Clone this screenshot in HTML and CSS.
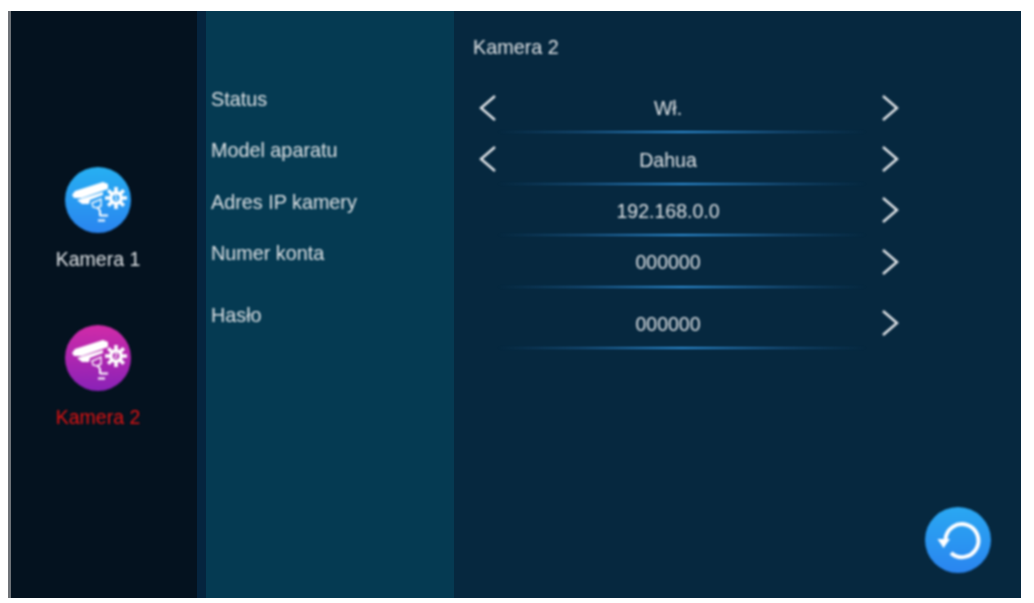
FILE: index.html
```html
<!DOCTYPE html>
<html lang="pl">
<head>
  <meta charset="UTF-8" />
  <title>Kamera 2</title>
  <link rel="stylesheet" href="styles.css">
</head>
<body>
  <svg class="defs" width="0" height="0">
    <symbol id="camIcon" viewBox="0 0 66 66">
      <!-- camera body -->
      <path d="M7 28 L10 24 L38 15 L43 17 L43 22 L17 31 L9 31 Z" fill="#fff"/>
      <path d="M12 33 L38 25 L38 28 L25 33 L24 37 L17 37 Z" fill="#fff"/>
      <path d="M27 36 L36 32 L36 39 L32 41 L28 40 Z" fill="none" stroke="#fff" stroke-width="1.4"/>
      <!-- bracket -->
      <path d="M33 41 L35 44 L35 49 M35 48.5 L43 48.5 M33 53.5 L40 53.5" fill="none" stroke="#fff" stroke-width="2"/>
      <!-- gear -->
      <circle cx="51" cy="31" r="7" fill="#fff"/>
      <path d="M51 20 V42 M40 31 H62 M43.2 23.2 L58.8 38.8 M58.8 23.2 L43.2 38.8" stroke="#fff" stroke-width="3.6"/>
      <circle cx="51" cy="31" r="3.4" fill="currentColor"/>
    </symbol>
  </svg>

  <div class="screen">
    <div class="side">
      <div class="cam cam-one">
        <div class="cam-btn">
          <svg class="cam-icon"><use href="#camIcon"/></svg>
          <span class="cam-digit">1</span>
        </div>
        <div class="cam-name">Kamera 1</div>
      </div>
      <div class="cam cam-two">
        <div class="cam-btn">
          <svg class="cam-icon"><use href="#camIcon"/></svg>
          <span class="cam-digit">2</span>
        </div>
        <div class="cam-name">Kamera 2</div>
      </div>
    </div>

    <div class="labels">
      <div class="label">Status</div>
      <div class="label">Model aparatu</div>
      <div class="label">Adres IP kamery</div>
      <div class="label">Numer konta</div>
      <div class="label label-last">Hasło</div>
    </div>

    <div class="main">
      <div class="title">Kamera 2</div>

      <div class="row">
        <svg class="arrow" viewBox="0 0 20 28"><path d="M17 2 L3 14 L17 26"/></svg>
        <div class="value">Wł.</div>
        <svg class="arrow" viewBox="0 0 20 28"><path d="M3 2 L17 14 L3 26"/></svg>
      </div>
      <div class="row">
        <svg class="arrow" viewBox="0 0 20 28"><path d="M17 2 L3 14 L17 26"/></svg>
        <div class="value">Dahua</div>
        <svg class="arrow" viewBox="0 0 20 28"><path d="M3 2 L17 14 L3 26"/></svg>
      </div>
      <div class="row">
        <span class="arrow"></span>
        <div class="value">192.168.0.0</div>
        <svg class="arrow" viewBox="0 0 20 28"><path d="M3 2 L17 14 L3 26"/></svg>
      </div>
      <div class="row">
        <span class="arrow"></span>
        <div class="value">000000</div>
        <svg class="arrow" viewBox="0 0 20 28"><path d="M3 2 L17 14 L3 26"/></svg>
      </div>
      <div class="row row-last">
        <span class="arrow"></span>
        <div class="value">000000</div>
        <svg class="arrow" viewBox="0 0 20 28"><path d="M3 2 L17 14 L3 26"/></svg>
      </div>

      <div class="back-btn">
        <svg viewBox="0 0 66 66" width="66" height="66">
          <path d="M20.5 32 A16.5 16.5 0 1 1 26 46" fill="none" stroke="#fff" stroke-width="4"/>
          <path d="M12.5 32 L25 32 L18.5 41 Z" fill="#fff"/>
        </svg>
      </div>
    </div>
  </div>
</body>
</html>
```
FILE: styles.css
```css
html, body {
  margin: 0;
  height: 100%;
  background-color: #fff;
}
body {
  padding: 11px 13px 5px 8px;
  box-sizing: border-box;
  height: 603px;
  overflow: hidden;
  font-family: "Liberation Sans", Arial, sans-serif;
  font-size: 19.5px;
  color: #dfe3e6;
}
.defs {
  position: absolute;
}
.screen {
  display: flex;
  height: 100%;
  background-color: #06283f;
  border-left: 3px solid #6f7378;
}
/* the reference is a soft photo of a panel, so only its content gets blurred */
.cam, .label, .title, .row, .back-btn {
  filter: blur(0.8px);
}

/* left list */
.side {
  width: 186px;
  flex-shrink: 0;
  background-color: #04121f;
  padding: 156px 12px 0 0;
  box-sizing: border-box;
}
.cam {
  display: flex;
  flex-direction: column;
  align-items: center;
  height: 157.5px;
}
.cam-btn {
  position: relative;
  width: 66px;
  height: 66px;
  border-radius: 50%;
}
.cam-one .cam-btn {
  background: linear-gradient(#27b0f2, #2a85f0);
  color: #2a9df2;
}
.cam-two .cam-btn {
  background: linear-gradient(#d12ba8, #8a22b8);
  color: #b028b0;
}
.cam-icon {
  width: 66px;
  height: 66px;
  display: block;
}
.cam-digit {
  position: absolute;
  left: 47px;
  top: 26px;
  width: 8px;
  text-align: center;
  font-size: 7px;
  line-height: 10px;
  font-weight: bold;
  color: #fff;
}
.cam-name {
  margin-top: 15px;
  line-height: 22px;
}
.cam-two .cam-name {
  color: #e01212;
}

/* labels column */
.labels {
  width: 257px;
  flex-shrink: 0;
  box-sizing: border-box;
  padding: 77px 0 0 5px;
  font-size: 19.8px;
  background: linear-gradient(to right, #05243e, #05243e 9px, #053a52 9px);
}
.label {
  height: 51.4px;
  line-height: 22px;
  padding-left: 9px;
  box-sizing: border-box;
}
.label-last {
  margin-top: 10px;
}

/* right part */
.main {
  flex: 1;
  position: relative;
  padding-left: 24px;
}
.title {
  height: 73px;
  padding-top: 25px;
  box-sizing: border-box;
  line-height: 22px;
  font-size: 19.8px;
  margin-left: -5px;
}
.row {
  display: flex;
  align-items: center;
  justify-content: space-between;
  width: 422px;
  height: 51.4px;
  position: relative;
  box-sizing: border-box;
}
.row::after {
  content: "";
  position: absolute;
  left: 20px;
  right: 34px;
  bottom: 2px;
  height: 2px;
  background: linear-gradient(to right, rgba(20, 70, 110, 0) 0%, #164d78 22%, #2f93dc 50%, #164d78 78%, rgba(20, 70, 110, 0) 100%);
}
.row-last {
  margin-top: 10px;
}
.value {
  text-align: center;
  margin: 0 42px 2px 0;
}
.arrow {
  width: 20px;
  height: 28px;
  margin-bottom: 4px;
  fill: none;
  stroke: #e6e9ec;
  stroke-width: 2.4;
  display: block;
}
.back-btn {
  position: absolute;
  right: 30px;
  bottom: 25px;
  width: 66px;
  height: 66px;
  border-radius: 50%;
  background: linear-gradient(#2aa8f2, #2a85f0);
}
.back-btn svg {
  display: block;
}
```
